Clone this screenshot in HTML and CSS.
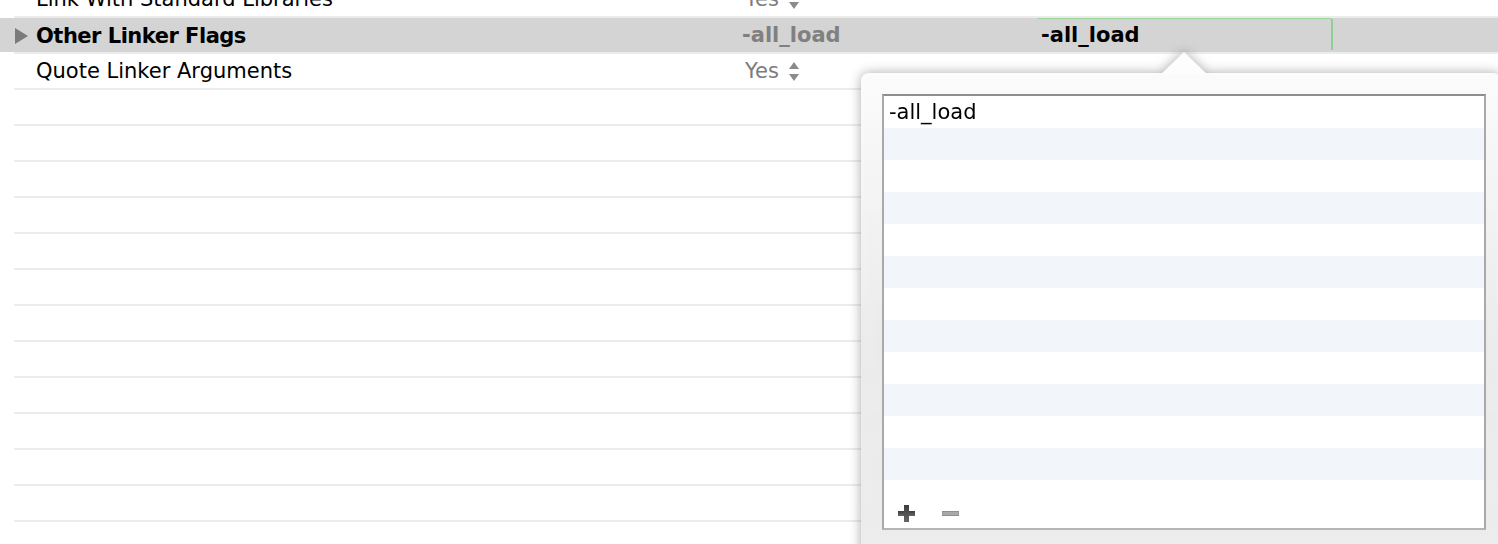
FILE: index.html
```html
<!DOCTYPE html>
<html>
<head>
<meta charset="utf-8">
<link rel="stylesheet" href="styles.css">
</head>
<body>
<div class="list">
  <div class="row">
    <div class="name"><span class="disc"></span>Link With Standard Libraries</div>
    <div class="val">Yes<svg class="stepper" width="10" height="20" viewBox="0 0 10 20"><polygon points="5,0 10,7 0,7"/><polygon points="0,12 10,12 5,19"/></svg></div>
    <div class="cell"></div><div></div>
  </div>
  <div class="row sel">
    <div class="name"><span class="disc"><svg width="13" height="16" viewBox="0 0 13 16"><polygon points="0,0 13,8 0,16" fill="#7b7b7b"/></svg></span><b class="title">Other Linker Flags</b></div>
    <div class="val strong">-all_load</div>
    <div class="edit">-all_load</div><div></div>
  </div>
  <div class="row">
    <div class="name"><span class="disc"></span>Quote Linker Arguments</div>
    <div class="val">Yes<svg class="stepper" width="10" height="20" viewBox="0 0 10 20"><polygon points="5,0 10,7 0,7"/><polygon points="0,12 10,12 5,19"/></svg></div>
    <div class="cell"></div><div></div>
  </div>
  <div class="row"></div>
  <div class="row"></div>
  <div class="row"></div>
  <div class="row"></div>
  <div class="row"></div>
  <div class="row"></div>
  <div class="row"></div>
  <div class="row"></div>
  <div class="row"></div>
  <div class="row"></div>
  <div class="row"></div>
  <div class="row"></div>
</div>

<div class="popover">
  <svg class="arrow" width="46" height="23" viewBox="0 0 46 23"><polygon points="0,23 23,1 46,23" fill="#fdfdfd"/></svg>
  <div class="pbody">
    <div class="table">
      <div class="trow">-all_load</div>
      <div class="trow"></div>
      <div class="trow"></div>
      <div class="trow"></div>
      <div class="trow"></div>
      <div class="trow"></div>
      <div class="trow"></div>
      <div class="trow"></div>
      <div class="trow"></div>
      <div class="trow"></div>
      <div class="trow"></div>
      <div class="trow"></div>
      <div class="tfoot">
        <svg width="17" height="17" viewBox="0 0 17 17">
          <defs><linearGradient id="pg" x1="0" y1="0" x2="0" y2="1"><stop offset="0" stop-color="#3c3c3c"/><stop offset="1" stop-color="#666"/></linearGradient></defs>
          <rect x="0" y="6" width="17" height="5" fill="url(#pg)"/>
          <rect x="6" y="0" width="5" height="17" fill="url(#pg)"/>
        </svg>
        <svg width="17" height="5" viewBox="0 0 17 5">
          <rect x="0" y="0" width="17" height="5" fill="#8f8f8f"/>
          <rect x="0.5" y="1" width="16" height="3" fill="#a9a9a9"/>
        </svg>
      </div>
    </div>
  </div>
</div>
</body>
</html>
```

FILE: styles.css
```css
html, body {
  margin: 0;
  height: 100%;
  overflow: hidden;
  background: #fff;
}

body {
  font-family: "DejaVu Sans", sans-serif;
  font-size: 21px;
  color: #000;
  position: relative;
}

.list {
  margin-top: -18px;
}

.row {
  display: grid;
  grid-template-columns: 742px 296px 295px 1fr;
  height: 36px;
  box-sizing: border-box;
  padding-bottom: 2px;
  background: linear-gradient(#ececec, #ececec) no-repeat 14px 100% / calc(100% - 14px) 2px;
}

.row.sel {
  background:
    linear-gradient(#ececec, #ececec) no-repeat 14px 100% / calc(100% - 14px) 2px,
    linear-gradient(#d4d4d4, #d4d4d4) no-repeat 0 0 / 100% 34px;
}

.row > div {
  line-height: 33px;
  padding-top: 1px;
  white-space: nowrap;
  overflow: hidden;
}

.name {
  display: flex;
  align-items: center;
  padding-left: 15px;
}

.disc {
  width: 13px;
  height: 16px;
  margin-right: 8px;
  display: flex;
}

.title {
  letter-spacing: -0.5px;
  position: relative;
  top: 1px;
}

.val {
  display: flex;
  align-items: center;
  color: #7c7c7c;
  padding-left: 3px;
}

.val.strong {
  font-weight: bold;
  color: #808080;
  padding-left: 0;
}

.stepper {
  margin-left: 10px;
  fill: #8a8a8a;
}

.edit {
  margin-bottom: 2px;
  border-top: 1px solid #98d398;
  border-right: 2px solid #90cf90;
  border-top-right-radius: 3px;
  padding-left: 3px;
  padding-top: 0 !important;
  font-weight: bold;
  line-height: 32px !important;
}

.popover {
  position: absolute;
  left: 861px;
  top: 51px;
  width: 640px;
  display: flex;
  flex-direction: column;
  filter: drop-shadow(0 0 6px rgba(0, 0, 0, 0.34));
}

.arrow {
  display: block;
  margin-left: 300px;
}

.pbody {
  margin-top: -1px;
  border-radius: 8px 8px 0 0;
  background: linear-gradient(rgba(253, 253, 253, 0.97), rgba(236, 236, 236, 0.98) 55%, #ececec);
  padding: 21px 10px 40px 21px;
}

.table {
  width: 604px;
  box-sizing: border-box;
  border: 2px solid #a9a9a9;
  border-top-color: #8e8e8e;
  border-bottom-color: #b5b5b5;
  background: #fff;
}

.trow {
  height: 32px;
  line-height: 33px;
  padding-left: 5px;
}

.trow:nth-child(even) {
  background: #f2f5fa;
}

.tfoot {
  height: 48px;
  box-sizing: border-box;
  padding: 18px 0 0 14px;
  display: flex;
  align-items: center;
  gap: 27px;
}

.tfoot svg {
  display: block;
}
```
